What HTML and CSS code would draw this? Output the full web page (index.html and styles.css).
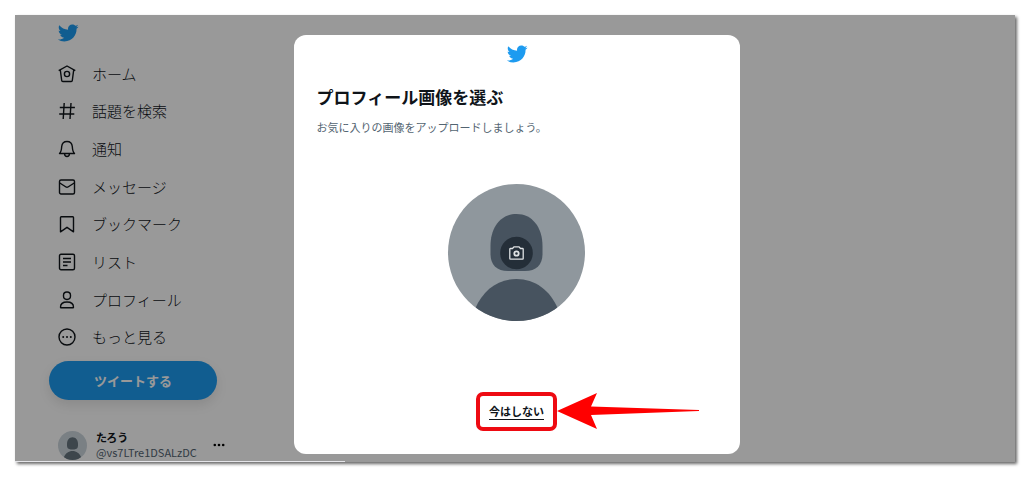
FILE: index.html
```html
<!DOCTYPE html>
<html lang="ja">

<head>
    <meta charset="UTF-8">
    <meta name="viewport" content="width=device-width, initial-scale=1.0">
    <title>プロフィール画像を選ぶ</title>
    <link rel="stylesheet" href="styles.css">
</head>

<body>
    <!-- Shared shapes -->
    <svg class="sprite" width="0" height="0" aria-hidden="true">
        <symbol id="bird" viewBox="0 0 24 24">
            <path d="M23.643 4.937c-.835.37-1.732.62-2.675.733.962-.576 1.7-1.49 2.048-2.578-.9.534-1.897.922-2.958 1.13-.85-.904-2.06-1.47-3.4-1.47-2.572 0-4.658 2.086-4.658 4.66 0 .364.042.718.12 1.06-3.873-.195-7.304-2.05-9.602-4.868-.4.69-.63 1.49-.63 2.342 0 1.616.823 3.043 2.072 3.878-.764-.025-1.482-.234-2.11-.583v.06c0 2.257 1.605 4.14 3.737 4.568-.392.106-.803.162-1.227.162-.3 0-.593-.028-.877-.082.593 1.85 2.313 3.198 4.352 3.234-1.595 1.25-3.604 1.995-5.786 1.995-.376 0-.747-.022-1.112-.065 2.062 1.323 4.51 2.093 7.14 2.093 8.57 0 13.255-7.098 13.255-13.254 0-.2-.005-.402-.014-.602.91-.658 1.7-1.477 2.323-2.41z" />
        </symbol>
        <symbol id="person" viewBox="0 0 137 137">
            <path d="M68.500 30C84 30 94.500 43 94.500 62V70C94.500 81 88 87 77 87H60C49 87 42.500 81 42.500 70V62C42.500 43 53 30 68.500 30Z" />
            <path d="M27 125C35 106 50 95 68.500 95S102 106 110 125L100 137H37Z" />
        </symbol>
    </svg>

    <div class="window">
        <!-- Sidebar -->
        <aside class="sidebar">
            <a class="logo" href="#" aria-label="Twitter">
                <svg class="bird"><use href="#bird" /></svg>
            </a>

            <nav class="nav">
                <a class="nav-item" href="#">
                    <svg class="icon" viewBox="0 0 18 18">
                        <path d="M0.700 5.700L9 1L17.300 5.700M2.300 5L3.700 15.500Q3.800 16.500 4.800 16.500H13.200Q14.200 16.500 14.300 15.500L15.700 5" />
                        <circle cx="9" cy="9" r="2.600" />
                    </svg>
                    ホーム
                </a>
                <a class="nav-item" href="#">
                    <svg class="icon" viewBox="0 0 18 18">
                        <path d="M6.200 1L5.200 17M13 1L12 17M1.800 5.500H16.900M1.200 12H16.300" />
                    </svg>
                    話題を検索
                </a>
                <a class="nav-item" href="#">
                    <svg class="icon" viewBox="0 0 18 18">
                        <path d="M1.500 13.500C3.200 12 3.500 10 3.700 6.500C4 3.500 6 1.500 9 1.500S14 3.500 14.300 6.500C14.500 10 14.800 12 16.500 13.500ZM6.500 13.800C6.700 17.400 11.300 17.400 11.500 13.800" />
                    </svg>
                    通知
                </a>
                <a class="nav-item" href="#">
                    <svg class="icon" viewBox="0 0 18 18">
                        <rect x="1.500" y="2" width="15" height="14" rx="1.500" />
                        <path d="M1.800 5L8 9Q9 9.600 10 9L16.200 5" />
                    </svg>
                    メッセージ
                </a>
                <a class="nav-item" href="#">
                    <svg class="icon" viewBox="0 0 18 18">
                        <path d="M2.500 2.500Q2.500 1.700 3.300 1.700H14.700Q15.500 1.700 15.500 2.500V16.800L9 12.300L2.500 16.800Z" />
                    </svg>
                    ブックマーク
                </a>
                <a class="nav-item" href="#">
                    <svg class="icon" viewBox="0 0 18 18">
                        <rect x="1.500" y="1.300" width="15" height="15.500" rx="1.500" />
                        <path d="M5 5.500H13M5 9H13M5 12.500H9.500" />
                    </svg>
                    リスト
                </a>
                <a class="nav-item" href="#">
                    <svg class="icon" viewBox="0 0 18 18">
                        <rect x="5.500" y="1" width="7" height="7.500" rx="3.400" />
                        <path d="M2.500 16.200C2.500 12.500 5.500 11 9 11S15.500 12.500 15.500 16.200Q15.500 16.700 15 16.700H3Q2.500 16.700 2.500 16.200Z" />
                    </svg>
                    プロフィール
                </a>
                <a class="nav-item" href="#">
                    <svg class="icon" viewBox="0 0 18 18">
                        <circle cx="9" cy="9" r="8" />
                        <path class="dots" d="M5.200 9H5.210M9 9H9.010M12.800 9H12.810" />
                    </svg>
                    もっと見る
                </a>
            </nav>

            <button class="tweet-button" type="button">ツイートする</button>

            <button class="account" type="button">
                <svg class="account-avatar" viewBox="0 0 137 137">
                    <use href="#person" />
                </svg>
                <span class="account-text">
                    <span class="account-name">たろう</span>
                    <span class="account-id">@vs7LTre1DSALzDC</span>
                </span>
                <svg class="account-more" viewBox="0 0 12 4">
                    <circle cx="1.800" cy="2" r="1.300" />
                    <circle cx="6" cy="2" r="1.300" />
                    <circle cx="10.200" cy="2" r="1.300" />
                </svg>
            </button>
        </aside>

        <!-- Modal -->
        <div class="overlay">
            <section class="modal" role="dialog" aria-labelledby="modal-title">
                <svg class="bird modal-bird"><use href="#bird" /></svg>
                <h1 class="modal-title" id="modal-title">プロフィール画像を選ぶ</h1>
                <p class="modal-text">お気に入りの画像をアップロードしましょう。</p>

                <button class="avatar" type="button" aria-label="画像を追加">
                    <svg class="avatar-image" viewBox="0 0 137 137">
                        <use href="#person" />
                        <circle class="camera-back" cx="68.500" cy="69" r="16.300" />
                        <path class="camera" d="M62.500 64.500H64.500L66 62.800H71L72.500 64.500H74.500Q75.200 64.500 75.200 65.200V74.500Q75.200 75.200 74.500 75.200H62.500Q61.800 75.200 61.800 74.500V65.200Q61.800 64.500 62.500 64.500Z" />
                        <circle class="camera-lens" cx="68.500" cy="69.500" r="2.200" />
                    </svg>
                </button>

                <div class="skip">
                    <a class="skip-link" href="#">今はしない</a>
                    <svg class="arrow" viewBox="0 0 142 36">
                        <path d="M0 18L40 0L34 13.500L142 17V18L34 22L40 36Z" />
                    </svg>
                </div>
            </section>
        </div>
    </div>
</body>

</html>
```

FILE: styles.css
```css
* {
    box-sizing: border-box;
}

body {
    margin: 0;
    padding: 15px 15px 16px;
    background-color: #ffffff;
    color: #0f1419;
    font-family: "Noto Sans CJK JP", "Noto Sans", sans-serif;
}

button {
    border: none;
    font-family: inherit;
    color: inherit;
    cursor: pointer;
}

.sprite {
    position: absolute;
}

.window {
    position: relative;
    display: flex;
    min-height: calc(100vh - 31px);
    background-color: #ffffff;
    box-shadow: 2px 2px 3px rgba(0, 0, 0, 0.6);
}

/* Light edge along the bottom */
.window::after {
    content: "";
    position: absolute;
    bottom: 0;
    left: 0;
    width: 33%;
    height: 1px;
    background-color: #e4e4e8;
}

/* Sidebar */
.sidebar {
    display: flex;
    flex-direction: column;
    width: 202px;
    padding-left: 34px;
}

.bird {
    display: block;
    width: 22px;
    height: 22px;
    fill: #1d9bf0;
}

.logo {
    padding: 7px 8px 11px;
}

.nav {
    display: flex;
    flex: 1;
    flex-direction: column;
}

.nav-item {
    display: flex;
    flex: 1;
    align-items: center;
    gap: 16px;
    padding-left: 9px;
    color: inherit;
    font-size: 15px;
    font-weight: 300;
    line-height: 20px;
    text-decoration: none;
}

.icon {
    width: 18px;
    height: 18px;
    fill: none;
    stroke: currentColor;
    stroke-width: 1.4;
    stroke-linejoin: round;
}

.icon .dots {
    stroke-width: 2;
    stroke-linecap: round;
}

.tweet-button {
    height: 39px;
    margin-top: 5px;
    border-radius: 20px;
    background-color: #1d9bf0;
    box-shadow: 0 5px 12px rgba(0, 0, 0, 0.1);
    color: #ffffff;
    font-size: 13px;
    font-weight: 700;
}

.account {
    display: flex;
    align-items: center;
    gap: 9px;
    margin-top: 30px;
    padding: 0 0 2px 9px;
    background: none;
    text-align: left;
}

.account-avatar {
    width: 29px;
    height: 29px;
    border-radius: 50%;
    background-color: #ccd6dd;
    fill: #66757f;
}

.account-text {
    display: flex;
    flex: 1;
    flex-direction: column;
    font-size: 11px;
    line-height: 15px;
}

.account-name {
    font-weight: 700;
}

.account-id {
    color: #536471;
}

.account-more {
    width: 12px;
    height: 4px;
    margin-right: -8px;
}

/* Modal */
.overlay {
    position: absolute;
    inset: 0;
    display: flex;
    justify-content: center;
    padding: 20px 0 8px 3px;
    background-color: rgba(0, 0, 0, 0.4);
}

.modal {
    display: flex;
    flex-direction: column;
    width: 100%;
    max-width: 446px;
    padding: 8px 23px 23px;
    border-radius: 12px;
    background-color: #ffffff;
}

.modal-bird {
    align-self: center;
}

.modal-title {
    margin: 19px 0 0;
    font-size: 17px;
    line-height: 26px;
}

.modal-text {
    margin: 8px 0 0;
    color: #536471;
    font-size: 11px;
    line-height: 18px;
}

.avatar {
    align-self: center;
    margin: 48px 0 auto;
    padding: 0;
    border-radius: 50%;
    background: #8f979d;
}

.avatar-image {
    display: block;
    width: 137px;
    height: 137px;
    border-radius: 50%;
    fill: #47535f;
}

.camera-back {
    fill: #242e38;
}

.camera,
.camera-lens {
    fill: none;
    stroke: #dfe2e4;
    stroke-width: 1.3;
}

.camera-lens {
    stroke-width: 1.8;
}

/* Skip link with its callout */
.skip {
    position: relative;
    align-self: center;
    padding: 7px 9px;
    border: 4px solid #ee0a12;
    border-radius: 7px;
    line-height: 16px;
}

.skip-link {
    display: block;
    border-bottom: 1px solid #0f1419;
    color: #0f1419;
    font-size: 11px;
    font-weight: 700;
    text-decoration: none;
}

.arrow {
    position: absolute;
    top: -3px;
    left: 100%;
    width: 142px;
    height: 36px;
    margin-left: 4px;
    fill: #ff0000;
}
```
